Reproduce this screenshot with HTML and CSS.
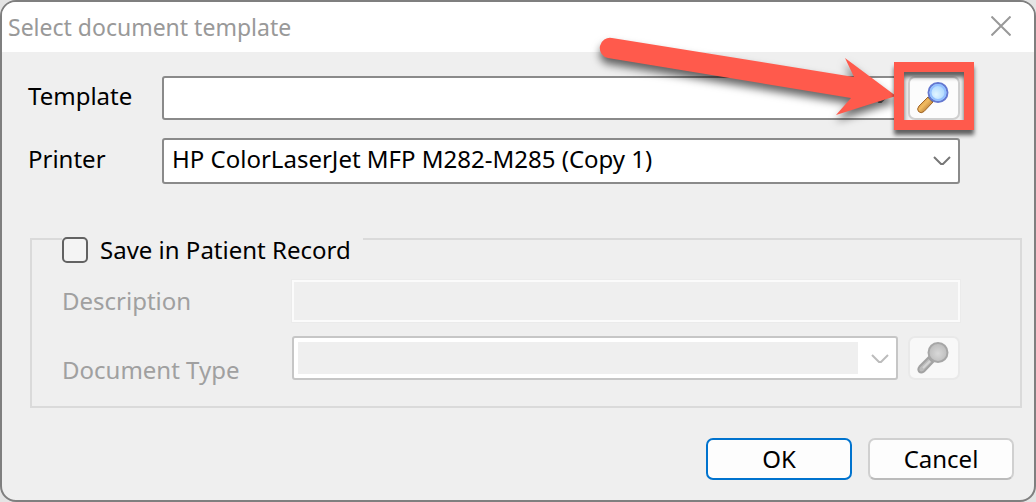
FILE: index.html
```html
<!DOCTYPE html>
<html lang="en">
<head>
<meta charset="utf-8">
<title>Select document template</title>
<link rel="stylesheet" href="styles.css">
</head>
<body>
<form class="dialog">
  <header class="titlebar">
    <h1 class="title">Select document template</h1>
    <button type="button" class="close" aria-label="Close">
      <svg width="20" height="20" viewBox="0 0 20 20"><path d="M0.5 0.5 19.5 19.5M19.5 0.5 0.5 19.5"/></svg>
    </button>
  </header>

  <section class="rows">
    <label for="template" class="label">Template</label>
    <div class="picker">
      <div class="combo">
        <select id="template" class="field"><option></option></select>
        <svg class="chevron" width="18" height="10" viewBox="0 0 18 10"><path d="M1 1 8 8H10L17 1"/></svg>
      </div>
      <div class="target">
        <button type="button" class="lookup" aria-label="Find template">
          <svg width="34" height="34" viewBox="0 0 34 34">
            <defs>
              <radialGradient id="glass" cx=".4" cy=".6" r=".7"><stop offset="0" stop-color="#e2f6ff"/><stop offset=".6" stop-color="#b4dcff"/><stop offset="1" stop-color="#80b4f6"/></radialGradient>
              <linearGradient id="wood" x1="0" y1="0" x2="1" y2="1"><stop offset="0" stop-color="#b06a20"/><stop offset=".45" stop-color="#f2bc62"/><stop offset="1" stop-color="#8c4c14"/></linearGradient>
            </defs>
            <path d="M11 16 16 21 7 30.500Q4 33 1.500 30.500Q-.5 28 2 25Z" fill="url(#wood)" stroke="#a06426"/>
            <path d="M11.500 16 16 20.500" stroke="#74624c" stroke-width="2"/>
            <circle cx="21" cy="11.500" r="9.500" fill="url(#glass)" stroke="#6478d0" stroke-width="2"/>
            <circle cx="21" cy="11.500" r="7.500" fill="none" stroke="#94c0ff" stroke-width="2"/>
          </svg>
        </button>
        <svg class="arrow" width="320" height="100" viewBox="0 0 320 100">
          <path d="M22 8 264 47 255 28 306 66 246 85 261 68 18 28A10 10 0 0 1 22 8Z"/>
        </svg>
        <span class="frame"></span>
      </div>
    </div>

    <label for="printer" class="label">Printer</label>
    <div class="combo">
      <select id="printer" class="field tall"><option>HP ColorLaserJet MFP M282-M285 (Copy 1)</option></select>
      <svg class="chevron" width="18" height="10" viewBox="0 0 18 10"><path d="M1 1 8 8H10L17 1"/></svg>
    </div>
  </section>

  <fieldset class="group">
    <legend class="legend">
      <label class="check"><input type="checkbox" class="box">Save in Patient Record</label>
    </legend>
    <div class="grouprows">
      <label for="description">Description</label>
      <input id="description" class="description" type="text" disabled>
      <label for="doctype" class="low">Document Type</label>
      <div class="picker">
        <div class="combo">
          <select id="doctype" class="field" disabled><option></option></select>
          <svg class="chevron off" width="18" height="10" viewBox="0 0 18 10"><path d="M1 1 8 8H10L17 1"/></svg>
        </div>
        <button type="button" class="lookup" disabled aria-label="Find document type">
          <svg width="34" height="34" viewBox="0 0 34 34">
            <defs>
              <radialGradient id="dull" cx=".5" cy=".55" r=".6"><stop offset="0" stop-color="#d8d8d8"/><stop offset="1" stop-color="#b8b8b8"/></radialGradient>
            </defs>
            <path d="M11.500 16.500 16 21 7 30.500Q4 32.500 2 30.500Q.5 28 2.500 25.500Z" fill="#bcbcbc" stroke="#a2a2a2" stroke-width="2"/>
            <path d="M13 20 6 27" stroke="#d4d4d4" stroke-width="2"/>
            <circle cx="21" cy="11.500" r="9.500" fill="url(#dull)" stroke="#a6a6a6" stroke-width="2"/>
          </svg>
        </button>
      </div>
    </div>
  </fieldset>

  <footer class="actions">
    <button type="submit" class="action primary">OK</button>
    <button type="button" class="action">Cancel</button>
  </footer>
</form>
</body>
</html>
```

FILE: styles.css
```css
* {
  box-sizing: border-box;
}

body {
  margin: 0;
  background: #e4e4e4;
  color: #000;
  font: 24px/28px "Noto Sans", sans-serif;
}

button,
input,
select {
  margin: 0;
  color: inherit;
  font: inherit;
}

svg {
  display: block;
  fill: none;
}

.dialog {
  min-height: 100vh;
  overflow: hidden;
  background: #efefef;
  border: 2px solid #7f7f7f;
  border-radius: 16px;
}

.titlebar {
  display: flex;
  align-items: center;
  justify-content: space-between;
  height: 50px;
  padding: 0 23px 2px 6px;
  background: #fff;
}

.title {
  margin: 0;
  padding-top: 2px;
  color: #999;
  font-size: 23px;
  font-weight: 400;
}

.close {
  padding: 0;
  background: none;
  border: 0;
}

.close svg {
  stroke: #999;
  stroke-width: 2;
}

.rows {
  display: grid;
  grid-template-columns: 134px 1fr;
  row-gap: 18px;
  align-items: center;
  padding: 24px 74px 0 26px;
}

.label {
  padding-bottom: 4px;
}

.picker {
  display: flex;
  gap: 10px;
}

.combo {
  position: relative;
  flex: 1;
}

.field {
  display: block;
  width: 100%;
  height: 44px;
  padding: 0 40px 4px 8px;
  appearance: none;
  background: #fff;
  border: 2px solid #8a8a8a;
  border-radius: 3px;
  line-height: 36px;
}

.tall {
  height: 46px;
}

.field:disabled {
  background: linear-gradient(#efefef, #efefef) 4px 4px / calc(100% - 42px) calc(100% - 8px) no-repeat #fff;
  border-color: #c6c6c6;
  opacity: 1;
}

.chevron {
  position: absolute;
  top: 18px;
  right: 9px;
  pointer-events: none;
  stroke: #777;
  stroke-width: 2;
}

.chevron.off {
  stroke: #bcbcbc;
}

.target {
  position: relative;
}

.lookup {
  display: grid;
  place-items: center;
  width: 52px;
  height: 44px;
  padding: 0;
  background: #fcfcfc;
  border: 2px solid #cfcfcf;
  border-radius: 7px;
}

.lookup:disabled {
  background: #f8f8f8;
  border-color: #e9e9e9;
}

.frame {
  position: absolute;
  inset: -14px -14px -10px;
  border: 10px solid #ff5a4c;
  filter: drop-shadow(0 5px 2px #0009);
  pointer-events: none;
}

.arrow {
  position: absolute;
  top: -46px;
  right: 50px;
  fill: #ff5a4c;
  filter: drop-shadow(0 6px 4px #0009);
  pointer-events: none;
}

.group {
  min-width: 0;
  margin: 54px 12px 0 28px;
  padding: 0 60px 26px 30px;
  border: 2px solid #dadada;
}

.legend {
  height: 2px;
  padding: 0 12px 0 0;
}

.check {
  display: flex;
  align-items: center;
  gap: 12px;
  margin-top: -2px;
}

.box {
  width: 26px;
  height: 26px;
  appearance: none;
  background: #f4f4f4;
  border: 2px solid #626262;
  border-radius: 5px;
}

.box:checked {
  background: #0067c0;
}

.grouprows {
  display: grid;
  grid-template-columns: 230px 1fr;
  row-gap: 14px;
  align-items: center;
  padding-top: 40px;
  color: #a0a0a0;
}

.low {
  align-self: end;
  line-height: 20px;
}

.description {
  width: 100%;
  height: 42px;
  padding: 0 8px;
  background: #efefef;
  border: 2px solid #fbfbfb;
  outline: 1px solid #ebebeb;
}

.actions {
  display: flex;
  justify-content: flex-end;
  gap: 16px;
  padding: 30px 20px 20px;
}

.action {
  width: 146px;
  height: 42px;
  padding: 0;
  background: #fdfdfd;
  border: 2px solid #d0d0d0;
  border-bottom-color: #bbb;
  border-radius: 7px;
}

.action.primary {
  border-color: #0073ce;
}
```
